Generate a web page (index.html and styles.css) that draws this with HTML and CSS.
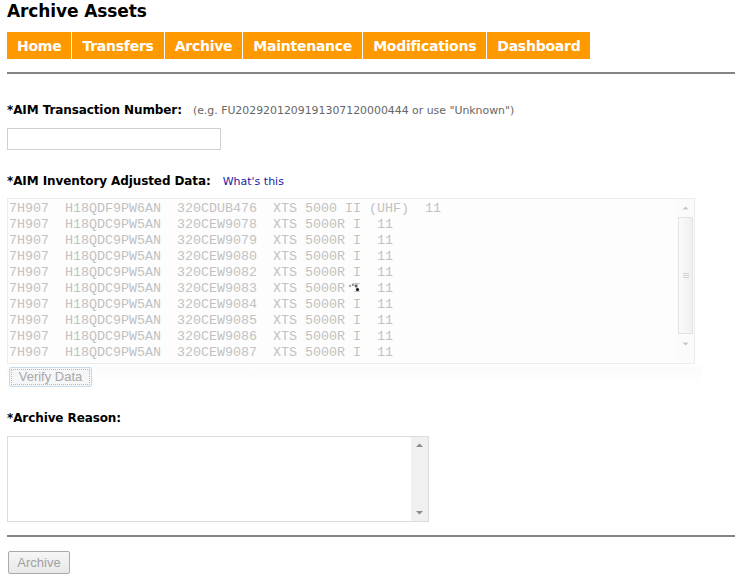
FILE: index.html
```html
<!DOCTYPE html>
<html>
<head>
<meta charset="utf-8">
<title>Archive Assets</title>
<link rel="stylesheet" href="styles.css">
</head>
<body>
<div class="page">
  <h1 class="title">Archive Assets</h1>
  <nav class="nav">
    <a class="tab">Home</a>
    <a class="tab">Transfers</a>
    <a class="tab">Archive</a>
    <a class="tab">Maintenance</a>
    <a class="tab">Modifications</a>
    <a class="tab">Dashboard</a>
  </nav>
  <div class="rule rule-top"></div>

  <div class="field-label first">
    <span class="lbl">*AIM Transaction Number:</span>
    <span class="hint">(e.g. FU2029201209191307120000444 or use "Unknown")</span>
  </div>
  <div class="input"></div>

  <div class="field-label second">
    <span class="lbl">*AIM Inventory Adjusted Data:</span>
    <a class="link">What's this</a>
  </div>
  <div class="databox">
    <div class="datatext">7H907  H18QDF9PW6AN  320CDUB476  XTS 5000 II (UHF)  11
7H907  H18QDC9PW5AN  320CEW9078  XTS 5000R I  11
7H907  H18QDC9PW5AN  320CEW9079  XTS 5000R I  11
7H907  H18QDC9PW5AN  320CEW9080  XTS 5000R I  11
7H907  H18QDC9PW5AN  320CEW9082  XTS 5000R I  11
7H907  H18QDC9PW5AN  320CEW9083  XTS 5000R I  11
7H907  H18QDC9PW5AN  320CEW9084  XTS 5000R I  11
7H907  H18QDC9PW5AN  320CEW9085  XTS 5000R I  11
7H907  H18QDC9PW5AN  320CEW9086  XTS 5000R I  11
7H907  H18QDC9PW5AN  320CEW9087  XTS 5000R I  11</div>
    <div class="sbar sbar-light">
      <svg class="arr" width="17" height="17" viewBox="0 0 17 17"><path d="M5.5 10.5 L8.5 7.5 L11.5 10.5 Z" fill="#c8c8c8"/></svg>
      <div class="thumb">
        <svg width="8" height="8" viewBox="0 0 8 8"><path d="M1 1.5H7M1 3.5H7M1 5.5H7" stroke="#d0d0d0" stroke-width="1"/></svg>
      </div>
      <svg class="arr" width="17" height="17" viewBox="0 0 17 17"><path d="M5.5 7.5 L8.5 10.5 L11.5 7.5 Z" fill="#c8c8c8"/></svg>
    </div>
    <svg class="busy" width="14" height="12" viewBox="0 0 14 12">
      <circle cx="2" cy="3" r="1.3" fill="#b0b0b0"/>
      <circle cx="5" cy="1.8" r="1.3" fill="#909090"/>
      <circle cx="8" cy="3" r="1.4" fill="#606060"/>
      <circle cx="9.5" cy="6.5" r="1.6" fill="#111"/>
    </svg>
  </div>
  <div class="verify-row">
    <button class="btn-verify" disabled><span class="focus">Verify Data</span></button>
  </div>

  <div class="field-label third">
    <span class="lbl">*Archive Reason:</span>
  </div>
  <div class="reason">
    <div class="reason-text"></div>
    <div class="sbar sbar-gray">
      <svg class="arr" width="17" height="17" viewBox="0 0 17 17"><path d="M5 10 L8.5 6.5 L12 10 Z" fill="#8a8a8a"/></svg>
      <div class="spacer"></div>
      <svg class="arr" width="17" height="17" viewBox="0 0 17 17"><path d="M5 7 L8.5 10.5 L12 7 Z" fill="#8a8a8a"/></svg>
    </div>
  </div>
  <div class="rule rule-bottom"></div>
  <button class="btn-archive" disabled>Archive</button>
</div>
</body>
</html>
```

FILE: styles.css
```css
html, body {
  margin: 0;
  padding: 0;
  background: #fff;
}
.page {
  padding: 0 8px 0 7px;
  font-family: "DejaVu Sans", Verdana, sans-serif;
  color: #000;
}
.title {
  margin: 0;
  font-size: 17px;
  line-height: 22px;
  font-weight: bold;
  letter-spacing: -0.1px;
}
.nav {
  display: flex;
  gap: 1px;
  margin-top: 10px;
  height: 27px;
}
.tab {
  display: flex;
  align-items: center;
  padding: 0 10px;
  background: #ff9900;
  color: #fff;
  font-weight: bold;
  font-size: 14px;
  letter-spacing: -0.25px;
}
.rule {
  height: 2px;
  background: #858585;
}
.rule-top {
  margin-top: 13px;
}
.field-label {
  display: flex;
  align-items: baseline;
  height: 16px;
  line-height: 16px;
}
.field-label.first { margin-top: 28px; }
.field-label.second { margin-top: 23px; }
.field-label.third { margin-top: 23px; }
.lbl {
  font-size: 12px;
  font-weight: bold;
  letter-spacing: -0.1px;
}
.hint {
  margin-left: 11px;
  font-size: 10.9px;
  color: #666;
}
.link {
  margin-left: 12px;
  font-size: 11px;
  color: #1a1aa6;
}
.input {
  margin-top: 10px;
  width: 212px;
  height: 20px;
  border: 1px solid #cfcfcf;
  background: #fff;
}
.databox {
  position: relative;
  margin-top: 9px;
  width: 686px;
  height: 164px;
  border: 1px solid #ececec;
  background: #fdfdfd;
  display: flex;
}
.datatext {
  flex: 1;
  padding: 2px 0 0 1px;
  font-family: "Liberation Mono", "Courier New", monospace;
  font-size: 13.33px;
  line-height: 16px;
  color: #c2c2c2;
  white-space: pre;
  overflow: hidden;
}
.sbar {
  width: 17px;
  display: flex;
  flex-direction: column;
}
.sbar-light {
  background: #fbfbfb;
}
.sbar-gray {
  background: #f0f0f0;
}
.arr {
  display: block;
  flex: none;
}
.thumb {
  margin: 1px 1px;
  height: 115px;
  border: 1px solid #e2e2e2;
  background: linear-gradient(to right, #fafafa, #f0f0f0);
  display: flex;
  align-items: center;
  justify-content: center;
}
.spacer {
  flex: 1;
}
.busy {
  position: absolute;
  left: 340px;
  top: 84px;
}
.verify-row {
  margin-top: 3px;
  width: 695px;
  background: linear-gradient(#fbfbfb, #ffffff);
}
.btn-verify {
  margin-left: 2px;
  width: 83px;
  height: 20px;
  padding: 1px;
  border: 1px solid #c5dbec;
  border-radius: 2px;
  background: #f5f6f7;
  font-family: "Liberation Sans", Arial, sans-serif;
  font-size: 13px;
  color: #a8a8a8;
  display: flex;
}
.focus {
  flex: 1;
  border: 1px dotted #b8b8b8;
  line-height: 14px;
}
.reason {
  margin-top: 10px;
  width: 420px;
  height: 84px;
  border: 1px solid #dcdcdc;
  display: flex;
}
.reason-text {
  flex: 1;
  background: #fff;
}
.rule-bottom {
  margin-top: 13px;
}
.btn-archive {
  margin-top: 14px;
  margin-left: 1px;
  width: 62px;
  height: 23px;
  border: 1px solid #ababab;
  border-radius: 2px;
  background: linear-gradient(#f6f6f6, #e8e8e8);
  font-family: "Liberation Sans", Arial, sans-serif;
  font-size: 13px;
  color: #a0a0a0;
  padding: 0;
}
```
